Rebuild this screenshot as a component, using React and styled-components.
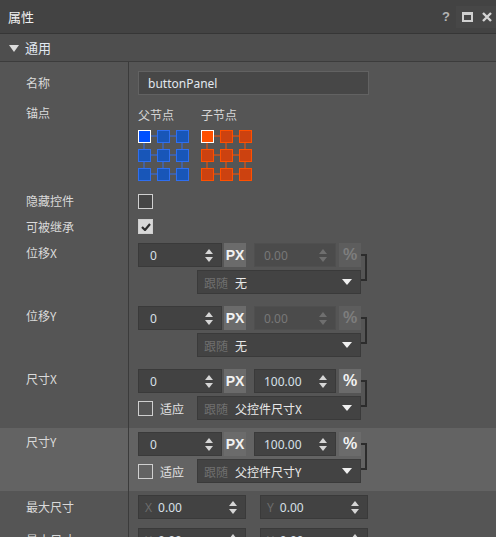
import React from "react"
import styled, { createGlobalStyle } from "styled-components"

const Global = createGlobalStyle`
  html, body { margin: 0; padding: 0; background: #555555; overflow: hidden; }
  body { font-family: "Noto Sans", "Noto Sans CJK SC", sans-serif; font-size: 12px; color: #dcdcdc; }
`

const Panel = styled.div`
  width: 496px;
  height: 537px;
  overflow: hidden;
  background: #555555;
  display: flex;
  flex-direction: column;
`

const TitleBar = styled.div`
  height: 33px;
  flex: none;
  background: #434343;
  border-bottom: 1px solid #363636;
  display: flex;
  align-items: center;
  padding-left: 8px;
`

const Title = styled.div`
  flex: 1;
  font-size: 13px;
  color: #f0f0f0;
  font-family: "Noto Sans CJK SC", sans-serif;
`

const TitleButton = styled.div`
  width: ${p => p.w || 20}px;
  height: 22px;
  display: flex;
  align-items: center;
  justify-content: center;
  background: ${p => p.bg || "transparent"};
  color: #b4b4b4;
  font-weight: bold;
  font-size: 13px;
  font-family: "Liberation Sans", sans-serif;
`

const MaxBox = styled.div`
  width: 7px;
  height: 5px;
  border: 2px solid #d0d0d0;
  border-top-width: 3px;
`

const SectionHeader = styled.div`
  height: 27px;
  flex: none;
  background: #4e4e4e;
  border-bottom: 1px solid #3c3c3c;
  display: flex;
  align-items: center;
  padding-left: 9px;
  gap: 6px;
  font-size: 13px;
  color: #e2e9f1;
  font-family: "Noto Sans CJK SC", sans-serif;
`

const Caret = styled.div`
  width: 0;
  height: 0;
  border-left: 5px solid transparent;
  border-right: 5px solid transparent;
  border-top: 7px solid #dcdcdc;
  margin-top: 1px;
`

const Row = styled.div`
  display: flex;
  flex: none;
  height: ${p => p.h}px;
  background: ${p => (p.hl ? "#636363" : "transparent")};
  align-items: ${p => (p.center ? "center" : "stretch")};
`

const Label = styled.div`
  width: 129px;
  flex: none;
  align-self: stretch;
  box-sizing: border-box;
  padding-left: 26px;
  padding-top: ${p => (p.center ? 0 : p.top)}px;
  display: flex;
  align-items: ${p => (p.center ? "center" : "flex-start")};
  border-right: 1px solid #3b3b3b;
  font-family: "Noto Sans CJK SC", sans-serif;
  font-size: 12px;
  line-height: 16px;
  color: #dadada;
`

const Value = styled.div`
  flex: 1;
  display: flex;
  align-items: ${p => (p.center ? "center" : "flex-start")};
  padding: ${p => p.pad || "0"};
  padding-left: 9px;
`

const TextInput = styled.div`
  width: 231px;
  height: 24px;
  box-sizing: border-box;
  background: #474747;
  border: 1px solid #626262;
  display: flex;
  align-items: center;
  padding-left: 9px;
  color: #e2e8ee;
  font-size: 12px;
`

const AnchorWrap = styled.div`
  display: flex;
  gap: 12px;
`

const AnchorCol = styled.div`
  display: flex;
  flex-direction: column;
  gap: 7px;
  font-family: "Noto Sans CJK SC", sans-serif;
  font-size: 12px;
  line-height: 16px;
  color: #d6d6d6;
`

const Check = styled.div`
  width: 13px;
  height: 13px;
  flex: none;
  border: 1px solid #cfcfcf;
  background: ${p => (p.on ? "#d8d8d8" : p.dark ? "#454545" : "transparent")};
  display: flex;
  align-items: center;
  justify-content: center;
`

const Lines = styled.div`
  width: 223px;
  display: flex;
  flex-direction: column;
  gap: 3px;
`

const Line = styled.div`
  display: flex;
  align-items: center;
  height: 24px;
  justify-content: ${p => (p.end ? "flex-end" : "flex-start")};
`

const NumBox = styled.div`
  width: ${p => p.w}px;
  height: 24px;
  box-sizing: border-box;
  flex: none;
  background: ${p => (p.off ? "#4b4b4b" : "#424242")};
  border: 1px solid ${p => (p.off ? "#4f4f4f" : "#3a3a3a")};
  display: flex;
  align-items: center;
  padding: 0 8px 0 ${p => p.pl || 11}px;
  color: ${p => (p.off ? "#787878" : "#d8e0e8")};
  font-size: 12px;
  margin-left: ${p => p.ml || 0}px;
`

const NumText = styled.span`
  flex: 1;
`

const Prefix = styled.span`
  color: #6c6c6c;
  margin-right: 6px;
`

const UnitButton = styled.div`
  width: 22px;
  height: 24px;
  flex: none;
  box-sizing: border-box;
  margin-left: ${p => p.ml}px;
  background: ${p => (p.off ? "#5d5d5d" : "#6b6b6b")};
  color: ${p => (p.off ? "#7e7e7e" : "#f2f2f2")};
  display: flex;
  align-items: center;
  justify-content: center;
  font-family: "Liberation Sans", sans-serif;
  font-weight: bold;
  font-size: ${p => p.fs}px;
`

const Bracket = styled.div`
  width: 6px;
  height: 27px;
  margin-top: 11px;
  box-sizing: border-box;
  border: 2px solid #2c2c2c;
  border-left: none;
  flex: none;
`

const FitLabel = styled.div`
  width: 59px;
  display: flex;
  align-items: center;
  gap: 7px;
  font-family: "Noto Sans CJK SC", sans-serif;
  color: #e4e4e4;
`

const Select = styled.div`
  width: 164px;
  height: 24px;
  box-sizing: border-box;
  background: #434343;
  border: 1px solid #3a3a3a;
  display: flex;
  align-items: center;
  padding: 0 8px 0 6px;
  font-family: "Noto Sans CJK SC", sans-serif;
  font-size: 12px;
`

const Follow = styled.span`
  color: #6f6f6f;
  margin-right: 7px;
`

const SelectText = styled.span`
  flex: 1;
  color: #e8e8e8;
`

const DownArrow = styled.div`
  width: 0;
  height: 0;
  border-left: 5px solid transparent;
  border-right: 5px solid transparent;
  border-top: 6px solid #f0f0f0;
`

const Spinner = ({ off }) => (
  <svg width="8" height="13" viewBox="0 0 8 13">
    <polygon points="4,0 8,5 0,5" fill={off ? "#6f6f6f" : "#d6d6d6"} />
    <polygon points="0,8 8,8 4,13" fill={off ? "#6f6f6f" : "#d6d6d6"} />
  </svg>
)

const AnchorGrid = ({ fill, stroke, sel }) => {
  const pos = [0, 19, 38]
  return (
    <svg width="51" height="51" viewBox="0 0 51 51">
      {pos.map(p => (
        <g key={p}>
          <line x1="12" y1={p + 6} x2="39" y2={p + 6} stroke={stroke} strokeWidth="1" />
          <line x1={p + 6} y1="12" x2={p + 6} y2="39" stroke={stroke} strokeWidth="1" />
        </g>
      ))}
      {pos.map(y =>
        pos.map(x => {
          const first = x === 0 && y === 0
          return (
            <rect
              key={x + "-" + y}
              x={x + 0.5}
              y={y + 0.5}
              width="12"
              height="12"
              fill={first ? sel : fill}
              stroke={first ? "#ffffff" : stroke}
              strokeWidth="1"
            />
          )
        })
      )}
    </svg>
  )
}

const OffsetBlock = ({ label, fit, right, rightOff, follow, hl }) => (
  <Row h={63} hl={hl}>
    <Label top={6}>{label}</Label>
    <Value pad="4px 0 0 0">
      <Lines>
        <Line>
          <NumBox w={84}>
            <NumText>0</NumText>
            <Spinner />
          </NumBox>
          <UnitButton ml={2} fs={14}>PX</UnitButton>
          <NumBox w={82} ml={8} off={rightOff} pl={9}>
            <NumText>{right}</NumText>
            <Spinner off={rightOff} />
          </NumBox>
          <UnitButton ml={3} fs={16} off={rightOff}>%</UnitButton>
        </Line>
        <Line end={!fit}>
          {fit && (
            <FitLabel>
              <Check />
              适应
            </FitLabel>
          )}
          <Select>
            <Follow>跟随</Follow>
            <SelectText>{follow}</SelectText>
            <DownArrow />
          </Select>
        </Line>
      </Lines>
      <Bracket />
    </Value>
  </Row>
)

const PairRow = ({ label, h }) => (
  <Row h={h}>
    <Label top={8}>{label}</Label>
    <Value pad="4px 0 0 0">
      <NumBox w={108} pl={6}>
        <Prefix>X</Prefix>
        <NumText>0.00</NumText>
        <Spinner />
      </NumBox>
      <NumBox w={108} ml={14} pl={6}>
        <Prefix>Y</Prefix>
        <NumText>0.00</NumText>
        <Spinner />
      </NumBox>
    </Value>
  </Row>
)

const App = () => (
  <>
    <Global />
    <Panel>
      <TitleBar>
        <Title>属性</Title>
        <TitleButton w={20}>?</TitleButton>
        <TitleButton w={22} bg="#474747">
          <MaxBox />
        </TitleButton>
        <TitleButton w={18} bg="#474747">
          <svg width="10" height="10" viewBox="0 0 10 10">
            <path d="M1 1 L9 9 M9 1 L1 9" stroke="#d4d4d4" strokeWidth="2.4" />
          </svg>
        </TitleButton>
      </TitleBar>
      <SectionHeader>
        <Caret />
        通用
      </SectionHeader>

      <Row h={38}>
        <Label top={13}>名称</Label>
        <Value pad="9px 0 0 0">
          <TextInput>buttonPanel</TextInput>
        </Value>
      </Row>

      <Row h={88}>
        <Label top={5}>锚点</Label>
        <Value pad="7px 0 0 0">
          <AnchorWrap>
            <AnchorCol>
              父节点
              <AnchorGrid fill="#1856b8" stroke="#2f6ff0" sel="#0050ff" />
            </AnchorCol>
            <AnchorCol>
              子节点
              <AnchorGrid fill="#cc4210" stroke="#ff5000" sel="#ff5000" />
            </AnchorCol>
          </AnchorWrap>
        </Value>
      </Row>

      <Row h={26} center>
        <Label center>隐藏控件</Label>
        <Value center>
          <Check dark />
        </Value>
      </Row>

      <Row h={25} center>
        <Label center>可被继承</Label>
        <Value center>
          <Check on>
            <svg width="10" height="8" viewBox="0 0 10 8">
              <path d="M1 4 L4 7 L9 1" fill="none" stroke="#2e2e2e" strokeWidth="2.2" />
            </svg>
          </Check>
        </Value>
      </Row>

      <OffsetBlock label="位移X" right="0.00" rightOff follow="无" />
      <OffsetBlock label="位移Y" right="0.00" rightOff follow="无" />
      <OffsetBlock label="尺寸X" right="100.00" fit follow="父控件尺寸X" />
      <OffsetBlock label="尺寸Y" right="100.00" fit follow="父控件尺寸Y" hl />

      <PairRow label="最大尺寸" h={33} />
      <PairRow label="最小尺寸" h={33} />
    </Panel>
  </>
)

export default App
